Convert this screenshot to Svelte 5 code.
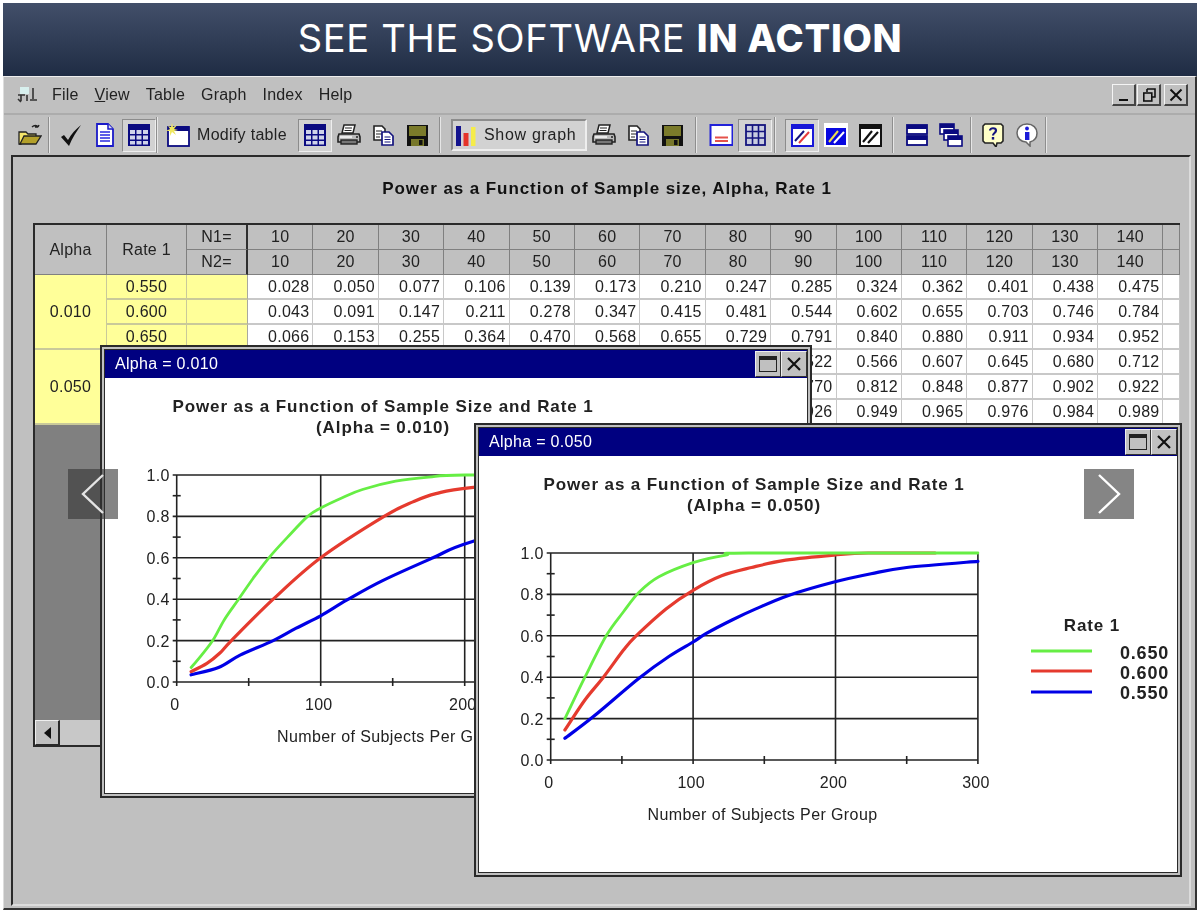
<script>
  const ns = [10,20,30,40,50,60,70,80,90,100,110,120,130,140];
  const groups = [
    { alpha: '0.010', rows: [
      { rate: '0.550', v: '0.028 0.050 0.077 0.106 0.139 0.173 0.210 0.247 0.285 0.324 0.362 0.401 0.438 0.475' },
      { rate: '0.600', v: '0.043 0.091 0.147 0.211 0.278 0.347 0.415 0.481 0.544 0.602 0.655 0.703 0.746 0.784' },
      { rate: '0.650', v: '0.066 0.153 0.255 0.364 0.470 0.568 0.655 0.729 0.791 0.840 0.880 0.911 0.934 0.952' }
    ]},
    { alpha: '0.050', rows: [
      { rate: '', v: '- - - - - - - - 0.522 0.566 0.607 0.645 0.680 0.712' },
      { rate: '', v: '- - - - - - - - 0.770 0.812 0.848 0.877 0.902 0.922' },
      { rate: '', v: '- - - - - - - - 0.926 0.949 0.965 0.976 0.984 0.989' }
    ]}
  ];
  const GREEN = '#66ee44', RED = '#e53a2e', BLUE = '#0000e6';
  const chart1 = {
    x0: 71.7, k: 1.44, line2: '(Alpha = 0.010)', cx: 278, axisX: 287, legend: false,
    curves: [
      { c: BLUE, w: 3.2, d: [[10,.035],[29,.07],[44,.13],[67,.2],[83,.26],[100,.32],[118,.395],[143,.49],[178,.6],[206,.68],[300,.86]] },
      { c: RED, w: 3.2, d: [[10,.05],[21,.09],[30,.14],[38,.2],[67,.4],[100,.6],[144,.8],[164,.87],[180,.91],[206,.94],[300,1]] },
      { c: GREEN, w: 2.8, d: [[10,.07],[15,.11],[25,.2],[33,.3],[43,.4],[53,.5],[64,.6],[77,.7],[91,.8],[100,.84],[115,.89],[129,.93],[152,.97],[175,.99],[200,1],[300,1]] }
    ]
  };
  const chart2 = {
    x0: 71.7, k: 1.424, line2: '(Alpha = 0.050)', cx: 275, axisX: 283.5, legend: true,
    curves: [
      { c: BLUE, w: 3.2, d: [[10,.105],[30,.21],[62,.395],[83,.5],[100,.57],[109,.61],[127,.675],[144,.73],[167,.795],[199,.86],[225,.9],[250,.93],[300,.96]] },
      { c: RED, w: 3.2, d: [[10,.145],[24,.29],[37,.4],[51,.53],[60,.6],[81,.73],[100,.82],[120,.89],[141,.93],[165,.965],[199,.99],[223,1],[270,1]] },
      { c: GREEN, w: 2.8, d: [[10,.2],[24,.4],[39,.6],[51,.715],[62,.81],[76,.885],[100,.953],[123,.99],[139,1],[300,1]] }
    ]
  };
  const Y1 = 97, Y0 = 304;
  const py = (p) => Y0 - (Y0 - Y1) * p;
  // Catmull-Rom through the data points, capped at power = 1.
  const curve = (ch, d) => {
    const P = d.map(([n, p]) => [ch.x0 + n * ch.k, py(p)]);
    let s = `M${P[0][0].toFixed(1)} ${P[0][1].toFixed(1)}`;
    for (let i = 0; i < P.length - 1; i++) {
      const a = P[Math.max(i - 1, 0)], b = P[i], c = P[i + 1], e = P[Math.min(i + 2, P.length - 1)];
      const c1 = [b[0] + (c[0] - a[0]) / 6, Math.max(py(1), b[1] + (c[1] - a[1]) / 6)];
      const c2 = [c[0] - (e[0] - b[0]) / 6, Math.max(py(1), c[1] - (e[1] - b[1]) / 6)];
      s += `C${c1[0].toFixed(1)} ${c1[1].toFixed(1)} ${c2[0].toFixed(1)} ${c2[1].toFixed(1)} ${c[0].toFixed(1)} ${c[1].toFixed(1)}`;
    }
    return s;
  };
</script>

{#snippet icon(name)}
  <svg class="ic" viewBox="0 0 24 24" width="24" height="24" aria-hidden="true">
    {#if name === 'folder'}
      <path d="M14 4c2-2 5-2 6 0M20 4l1-2M20 4l-3 0" fill="none" stroke="#222" stroke-width="1.4"/>
      <path d="M1 9h7l2 2h8v3H7L3 21H1z" fill="#f5e56a" stroke="#222" stroke-width="1.3"/>
      <path d="M6 13h17l-5 8H2z" fill="#b3a02a" stroke="#222" stroke-width="1.3"/>
    {:else if name === 'check'}
      <path d="M2 14l3-2 4 5C12 11 17 6 22 2c-4 6-9 13-12 21z" fill="#111"/>
    {:else if name === 'doc'}
      <path d="M4 1h11l5 5v17H4z" fill="#fff" stroke="#1a1ac8" stroke-width="1.8"/>
      <path d="M15 1v5h5" fill="#dde" stroke="#1a1ac8" stroke-width="1.5"/>
      <path d="M7 9h10M7 12h10M7 15h10M7 18h10" stroke="#2a2ae0" stroke-width="1.5"/>
    {:else if name === 'grid'}
      <rect x="1" y="1" width="22" height="22" fill="#0a0a80"/>
      <g fill="#cfd3ea">
        <rect x="3" y="7" width="5" height="4"/><rect x="9.5" y="7" width="5" height="4"/><rect x="16" y="7" width="5" height="4"/>
        <rect x="3" y="12.5" width="5" height="4"/><rect x="9.5" y="12.5" width="5" height="4"/><rect x="16" y="12.5" width="5" height="4"/>
        <rect x="3" y="18" width="5" height="3.5"/><rect x="9.5" y="18" width="5" height="3.5"/><rect x="16" y="18" width="5" height="3.5"/>
      </g>
    {:else if name === 'gridlight'}
      <rect x="3" y="2" width="19" height="20" fill="#c8cce0" stroke="#14147e" stroke-width="1.8"/>
      <path d="M9.5 2v20M15.5 2v20M3 8.5h19M3 15h19" stroke="#14147e" stroke-width="1.6"/>
    {:else if name === 'newtable'}
      <rect x="2" y="4" width="21" height="19" fill="#fff" stroke="#0a0a80" stroke-width="1.8"/>
      <rect x="2" y="3" width="21" height="5" fill="#0a0a80"/>
      <path d="M6 0l1 4 4-2-3 4 4 1-4 1 2 4-4-3-2 4 0-5-4 0 4-2-2-3 3 1z" fill="#f0e860"/>
    {:else if name === 'printer'}
      <path d="M7 2h11l-2 8H5z" fill="#fff" stroke="#222" stroke-width="1.5"/>
      <path d="M8 5h7M7.5 7.5h7" stroke="#222" stroke-width="1"/>
      <path d="M2 11h20l1 3v5H1v-5z" fill="#bbb" stroke="#222" stroke-width="1.6"/>
      <rect x="4" y="17" width="16" height="4" fill="#777" stroke="#222" stroke-width="1.4"/>
      <path d="M3 14h12" stroke="#fff" stroke-width="1.4"/>
      <circle cx="20" cy="14" r="1" fill="#222"/>
    {:else if name === 'copy'}
      <path d="M3 3h8l3 3v11H3z" fill="#fff" stroke="#222" stroke-width="1.6"/>
      <path d="M5 8h6M5 11h6M5 14h4" stroke="#222" stroke-width="1.2"/>
      <path d="M11 9h7l4 4v9H11z" fill="#fff" stroke="#14147e" stroke-width="1.7"/>
      <path d="M13.5 14h6M13.5 16.5h6M13.5 19h6" stroke="#14147e" stroke-width="1.2"/>
    {:else if name === 'floppy'}
      <rect x="2" y="2" width="21" height="21" fill="#111"/>
      <rect x="4" y="3" width="17" height="10" fill="#7a7a2a"/>
      <rect x="6" y="16" width="13" height="7" fill="#77772a"/>
      <rect x="14" y="17" width="3.5" height="5" fill="#111"/>
    {:else if name === 'bars'}
      <rect x="2" y="3" width="5" height="20" fill="#14148e"/>
      <rect x="9.5" y="10" width="5" height="13" fill="#e5342a"/>
      <rect x="17" y="4" width="4.5" height="19" fill="#f5ec4a"/>
    {:else if name === 'redline'}
      <rect x="1.5" y="2" width="22" height="20" fill="#fff" stroke="#2222d8" stroke-width="2"/>
      <path d="M6 14.5h13M6 18h13" stroke="#e5524a" stroke-width="1.8"/>
    {:else if name === 'slash1'}
      <rect x="2" y="2" width="21" height="21" fill="#fff" stroke="#1818d8" stroke-width="2"/>
      <rect x="2" y="1" width="21" height="5" fill="#1818d8"/>
      <path d="M5 18L14 8" stroke="#14147e" stroke-width="2"/><path d="M9 20L19 9" stroke="#e53a3a" stroke-width="2"/>
    {:else if name === 'slash2'}
      <rect x="0" y="0" width="24" height="24" fill="#fff"/>
      <rect x="2" y="5" width="20" height="17" fill="#0808e0"/>
      <path d="M5 19L14 8" stroke="#eee04a" stroke-width="2"/><path d="M10 20L20 9" stroke="#fff" stroke-width="2"/>
    {:else if name === 'slash3'}
      <rect x="2" y="2" width="21" height="21" fill="#fff" stroke="#111" stroke-width="2"/>
      <rect x="2" y="1" width="21" height="5" fill="#111"/>
      <path d="M5 19L14 8" stroke="#111" stroke-width="2.2"/><path d="M10 20L20 9" stroke="#111" stroke-width="2.2"/>
    {:else if name === 'stack'}
      <rect x="2" y="2" width="20" height="9" fill="#fff" stroke="#0a0a80" stroke-width="1.8"/>
      <rect x="2" y="2" width="20" height="4" fill="#0a0a80"/>
      <rect x="2" y="13" width="20" height="9" fill="#fff" stroke="#0a0a80" stroke-width="1.8"/>
      <rect x="2" y="13" width="20" height="4" fill="#0a0a80"/>
    {:else if name === 'cascade'}
      <rect x="1" y="1" width="14" height="10" fill="#fff" stroke="#0a0a80" stroke-width="1.6"/><rect x="1" y="1" width="14" height="4" fill="#0a0a80"/>
      <rect x="5" y="7" width="14" height="10" fill="#fff" stroke="#0a0a80" stroke-width="1.6"/><rect x="5" y="7" width="14" height="4" fill="#0a0a80"/>
      <rect x="9" y="13" width="14" height="10" fill="#fff" stroke="#0a0a80" stroke-width="1.6"/><rect x="9" y="13" width="14" height="4" fill="#0a0a80"/>
    {:else if name === 'help'}
      <path d="M4 1h16l2 2v15l-2 2h-4l-1 4-3-4H4l-2-2V3z" fill="#ffffc8" stroke="#222" stroke-width="1.6"/>
      <path d="M9 7.5c0-3 6-3 6 0 0 2.5-3 2.5-3 5" fill="none" stroke="#14147e" stroke-width="2.2"/>
      <rect x="10.8" y="14" width="2.4" height="2.6" fill="#14147e"/>
    {:else if name === 'info'}
      <path d="M12 1c6 0 10 4 10 9s-3 8-7 9l0 4-4-4C6 19 2 15 2 10s4-9 10-9z" fill="#fff" stroke="#666" stroke-width="1.5"/>
      <circle cx="12" cy="5.5" r="1.9" fill="#1a1ad8"/>
      <rect x="10" y="9" width="4.4" height="8" fill="#1a1ad8"/>
    {/if}
  </svg>
{/snippet}

{#snippet tb(name, pressed = false)}
  <span class="tb" class:pressed>{@render icon(name)}</span>
{/snippet}

{#snippet chart(ch)}
  <svg class="chart" aria-hidden="false">
    <text class="ttl" x={ch.cx} y="34">Power as a Function of Sample Size and Rate 1</text>
    <text class="ttl" x={ch.cx} y="55">{ch.line2}</text>
    <g class="grid">
      {#each [1, .8, .6, .4, .2, 0] as p}
        <line x1={ch.x0 - 4} x2={ch.x0 + 300 * ch.k} y1={py(p)} y2={py(p)}/>
        <text class="yl" x={ch.x0 - 7} y={py(p) + 6}>{p.toFixed(1)}</text>
      {/each}
      {#each [.1, .3, .5, .7, .9] as p}
        <line x1={ch.x0 - 4} x2={ch.x0 + 4} y1={py(p)} y2={py(p)}/>
      {/each}
      {#each [0, 100, 200, 300] as n}
        <line x1={ch.x0 + n * ch.k} x2={ch.x0 + n * ch.k} y1={Y1} y2={Y0 + 4}/>
        <text class="xl" x={ch.x0 + n * ch.k - 2} y="332">{n}</text>
      {/each}
      {#each [50, 150, 250] as n}
        <line x1={ch.x0 + n * ch.k} x2={ch.x0 + n * ch.k} y1={Y0 - 4} y2={Y0 + 4}/>
      {/each}
    </g>
    {#each ch.curves as c}
      <path d={curve(ch, c.d)} fill="none" stroke={c.c} stroke-width={c.w} stroke-linejoin="round" stroke-linecap="round"/>
    {/each}
    <text class="xl axis" x={ch.axisX} y="364">Number of Subjects Per Group</text>
    {#if ch.legend}
      <text class="ttl" x="613" y="175">Rate 1</text>
      <line x1="552" x2="613" y1="195" y2="195" stroke={GREEN} stroke-width="3"/>
      <line x1="552" x2="613" y1="215" y2="215" stroke={RED} stroke-width="3"/>
      <line x1="552" x2="613" y1="236" y2="236" stroke={BLUE} stroke-width="3"/>
      <text class="lg" x="690" y="203">0.650</text>
      <text class="lg" x="690" y="223">0.600</text>
      <text class="lg" x="690" y="243">0.550</text>
    {/if}
  </svg>
{/snippet}

{#snippet mdi(title, ch, cls)}
  <section class="mdi {cls}">
    <div class="inner">
      <header class="tbar">
        <span class="tt">{title}</span>
        <span class="wbtn"><i class="max"></i></span>
        <span class="wbtn">
          <svg viewBox="0 0 14 14" width="14" height="14" aria-hidden="true"><path d="M1 1l12 12M13 1L1 13" stroke="#111" stroke-width="2.2"/></svg>
        </span>
      </header>
      <div class="pane">{@render chart(ch)}</div>
    </div>
  </section>
{/snippet}

<div class="page">
  <h1 class="banner">SEE THE SOFTWARE <b>IN ACTION</b></h1>

  <div class="win">
    <nav class="menubar">
      <svg class="appicon" viewBox="0 0 22 16" width="22" height="16" aria-hidden="true">
        <rect x="3" y="0" width="9" height="7" fill="#d8f0ee"/>
        <path d="M1 8h7M4 8v6M1 12l3 3M10 8v6M16 1v11M13 13h7" stroke="#333" stroke-width="1.6" fill="none"/>
      </svg>
      <span>File</span><span><u>V</u>iew</span><span>Table</span><span>Graph</span><span>Index</span><span>Help</span>
      <div class="ctl">
        <span class="cb"><i class="mn"></i></span>
        <span class="cb">
          <svg viewBox="0 0 14 14" width="14" height="14" aria-hidden="true"><path d="M5 1h8v8h-3M5 1v3" fill="none" stroke="#111" stroke-width="1.6"/><rect x="1.8" y="5" width="8" height="8" fill="none" stroke="#111" stroke-width="1.6"/></svg>
        </span>
        <span class="cb gap">
          <svg viewBox="0 0 14 14" width="14" height="14" aria-hidden="true"><path d="M1.5 1.5l11 11M12.5 1.5l-11 11" stroke="#111" stroke-width="2"/></svg>
        </span>
      </div>
    </nav>

    <div class="toolbar">
      {@render tb('folder')}
      <i class="sep s-a"></i>
      {@render tb('check')}{@render tb('doc')}{@render tb('grid', true)}
      <i class="sep s-b"></i>
      {@render tb('newtable')}
      <span class="lbl">Modify table</span>
      {@render tb('grid', true)}{@render tb('printer')}{@render tb('copy')}{@render tb('floppy')}
      <i class="sep s-c"></i>
      <span class="showgraph">{@render icon('bars')}<span>Show graph</span></span>
      {@render tb('printer')}{@render tb('copy')}{@render tb('floppy')}
      <i class="sep s-d"></i>
      {@render tb('redline')}{@render tb('gridlight', true)}
      <i class="sep s-e"></i>
      {@render tb('slash1', true)}{@render tb('slash2')}{@render tb('slash3')}
      <i class="sep s-f"></i>
      {@render tb('stack')}{@render tb('cascade')}
      <i class="sep s-g"></i>
      {@render tb('help')}{@render tb('info')}
      <i class="sep s-h"></i>
    </div>

    <main class="client">
      <h2 class="maintitle">Power as a Function of Sample size, Alpha, Rate 1</h2>
      <div class="tablewrap">
        <table>
          <colgroup>
            <col class="c-alpha"/><col class="c-rate"/><col class="c-n"/>
            {#each ns as _}<col class="c-d"/>{/each}
            <col class="c-last"/>
          </colgroup>
          <thead>
            <tr>
              <th rowspan="2">Alpha</th><th rowspan="2">Rate 1</th><th class="nh">N1=</th>
              {#each ns as n}<th>{n}</th>{/each}<th></th>
            </tr>
            <tr>
              <th class="nh">N2=</th>
              {#each ns as n}<th>{n}</th>{/each}<th></th>
            </tr>
          </thead>
          <tbody>
            {#each groups as g}
              {#each g.rows as r, i}
                <tr>
                  {#if i === 0}<td class="y" rowspan="3">{g.alpha}</td>{/if}
                  <td class="y">{r.rate}</td>
                  <td class="y yn"></td>
                  {#each r.v.split(' ') as v}<td class="num">{v === '-' ? '' : v}</td>{/each}
                  <td class="end"></td>
                </tr>
              {/each}
            {/each}
          </tbody>
        </table>
        <div class="empty"></div>
        <div class="hscroll">
          <span class="sb"><i class="la"></i></span>
          <span class="track"></span>
        </div>
      </div>

      {@render mdi('Alpha = 0.010', chart1, 'w1')}
      {@render mdi('Alpha = 0.050', chart2, 'w2')}
    </main>
  </div>

  <button class="arrow prev" aria-label="Previous">
    <svg viewBox="0 0 50 50" width="50" height="50" aria-hidden="true"><path d="M35 6L15 25l20 19" fill="none" stroke="#e4e4e4" stroke-width="2.4"/></svg>
  </button>
  <button class="arrow next" aria-label="Next">
    <svg viewBox="0 0 50 50" width="50" height="50" aria-hidden="true"><path d="M15 6l20 19-20 19" fill="none" stroke="#fff" stroke-width="2.4"/></svg>
  </button>
</div>

<style>
  :global(body) { margin: 0; background: #fff; }
  .page {
    position: relative; width: 1200px; height: 914px; box-sizing: border-box;
    padding: 3px 3px 4px; display: flex; flex-direction: column; overflow: hidden;
    font-family: "Liberation Sans", Arial, sans-serif; color: #222;
  }
  .banner {
    margin: 0; height: 73px; line-height: 70px; text-align: center; flex: none;
    background: linear-gradient(#424f69, #1f2c44); color: #fff;
    font-family: Inter, "Open Sans", sans-serif; font-weight: 400; font-size: 38px; letter-spacing: .72px;
  }
  .banner b { font-weight: 800; }
  .win {
    flex: 1; min-height: 0; display: flex; flex-direction: column; background: #c0c0c0;
    border-top: 1px solid #eee; border-left: 1px solid #ddd; border-right: 2px solid #333; border-bottom: 2px solid #333;
    filter: blur(.55px);
  }
  .menubar {
    height: 38px; flex: none; box-sizing: border-box; display: flex; align-items: center; gap: 16px;
    padding: 0 7px 0 13px; font-size: 16px; letter-spacing: .2px; border-bottom: 2px solid #acacac;
  }
  .appicon { margin-right: -3px; }
  .ctl { margin-left: auto; display: flex; align-items: center; }
  .cb {
    width: 24px; height: 22px; box-sizing: border-box; background: #c0c0c0; display: flex; align-items: center; justify-content: center;
    border-top: 1px solid #f4f4f4; border-left: 1px solid #f4f4f4; border-right: 2px solid #444; border-bottom: 2px solid #444;
    margin-left: 1px;
  }
  .cb.gap { margin-left: 3px; }
  .mn { width: 9px; height: 2.5px; background: #111; margin-top: 11px; display: block; }
  .toolbar {
    height: 40px; flex: none; box-sizing: border-box; display: flex; align-items: center; padding-left: 9px;
  }
  .tb { width: 34px; height: 33px; display: flex; align-items: center; justify-content: center; flex: none; box-sizing: border-box; }
  .tb.pressed { background: #d2d2d2; border: 1px solid; border-color: #8c8c8c #eee #eee #8c8c8c; }
  .ic { display: block; flex: none; }
  .sep { display: block; width: 2px; height: 36px; flex: none; background: linear-gradient(90deg, #8e8e8e 50%, #e6e6e6 50%); }
  .s-a { margin: 0 4px 0 1px; }
  .s-b { margin: 0 3px 0 0; }
  .s-c { margin: 0 10px 0 5px; }
  .s-d { margin: 0 7px 0 6px; }
  .s-e { margin: 0 9px 0 2px; }
  .s-f { margin: 0 6px 0 5px; }
  .s-g { margin: 0 4px 0 2px; }
  .s-h { margin: 0 0 0 1px; }
  .lbl { width: 103px; font-size: 16px; letter-spacing: .3px; white-space: nowrap; padding-left: 2px; box-sizing: border-box; }
  .showgraph {
    width: 136px; height: 32px; flex: none; box-sizing: border-box; display: flex; align-items: center; gap: 6px; padding-left: 1px;
    background: #d2d2d2; border: 2px solid; border-color: #8c8c8c #eee #eee #8c8c8c; font-size: 16px; letter-spacing: .7px; white-space: nowrap;
  }
  .client {
    position: relative; flex: 1; min-height: 0; margin: 0 4px 2px 7px; box-sizing: border-box;
    border-top: 2px solid #2a2a2a; border-left: 2px solid #2a2a2a; border-right: 2px solid #dcdcdc; border-bottom: 2px solid #dcdcdc;
    padding: 0 0 0 20px;
  }
  .maintitle {
    margin: 0; height: 66px; line-height: 64px; text-align: center; font-size: 17px; font-weight: 700; color: #111; letter-spacing: .92px;
    padding-right: 8px;
  }
  .tablewrap {
    width: 1147px; height: 524px; box-sizing: border-box; display: flex; flex-direction: column;
    border-top: 2px solid #2a2a2a; border-left: 2px solid #2a2a2a; border-bottom: 2px solid #2a2a2a; background: #808080;
  }
  table { table-layout: fixed; width: 1145px; border-collapse: separate; border-spacing: 0; background: #fff; flex: none; }
  .c-alpha { width: 72px; } .c-rate { width: 80px; } .c-n { width: 61px; } .c-d { width: 65.4px; } .c-last { width: 16.4px; }
  th, td { height: 25px; box-sizing: border-box; padding: 0; font-size: 16px; font-weight: 400; text-align: center; letter-spacing: .25px; color: #222; overflow: hidden; white-space: nowrap; }
  th { background: #c0c0c0; border-right: 1px solid #808080; border-bottom: 1px solid #808080; }
  th.nh { border-right: 2px solid #2f2f2f; }
  td { border-right: 1px solid #c8c8c8; border-bottom: 2px solid #c8c8c8; }
  td.y { background: #ffff99; border-color: #c9c99a; }
  td.yn { border-right-color: #a8a8a0; }
  td.num { text-align: right; padding-right: 3px; background: #fff; }
  .empty { flex: 1; }
  .hscroll { height: 25px; flex: none; display: flex; background: #c8c8c8; }
  .sb { width: 25px; box-sizing: border-box; display: flex; align-items: center; justify-content: center; background: #c0c0c0; border: 1px solid; border-color: #eee #2a2a2a #2a2a2a #eee; border-right-width: 2px; }
  .la { width: 0; height: 0; border: 6px solid transparent; border-right: 7px solid #111; border-left: 0; }
  .track { flex: 1; }
  .mdi { position: absolute; box-sizing: border-box; border: 2px solid #2a2a2a; padding: 2px; background: #c0c0c0; }
  .w1 { left: 87px; top: 188px; width: 712px; height: 453px; }
  .w2 { left: 461px; top: 266px; width: 708px; height: 454px; }
  .inner { height: 100%; box-sizing: border-box; border: 1px solid #2a2a2a; display: flex; flex-direction: column; background: #fff; }
  .tbar { height: 28px; flex: none; background: #000080; color: #fff; display: flex; align-items: center; padding-left: 10px; font-size: 16px; letter-spacing: .3px; }
  .tt { flex: 1; }
  .wbtn { width: 26px; height: 26px; box-sizing: border-box; background: #c0c0c0; display: flex; align-items: center; justify-content: center; border-top: 1px solid #eee; border-left: 1px solid #eee; border-right: 1px solid #333; border-bottom: 1px solid #333; }
  .max { width: 18px; height: 16px; box-sizing: border-box; border: 1.5px solid #222; border-top-width: 4px; display: block; }
  .pane { flex: 1; min-height: 0; background: #fff; }
  .chart { display: block; width: 100%; height: 100%; }
  .chart text { font-family: "Liberation Sans", Arial, sans-serif; fill: #222; }
  .ttl { font-size: 17px; font-weight: 700; text-anchor: middle; fill: #111; letter-spacing: .9px; }
  .grid line { stroke: #222; stroke-width: 1.6; }
  .yl { font-size: 16px; text-anchor: end; letter-spacing: .3px; }
  .xl { font-size: 16px; text-anchor: middle; letter-spacing: .2px; }
  .axis { letter-spacing: .4px; }
  .lg { font-size: 18px; font-weight: 700; text-anchor: end; letter-spacing: .8px; fill: #111; }
  .arrow { position: absolute; top: 469px; width: 50px; height: 50px; padding: 0; border: 0; background: rgba(51,51,51,.6); display: block; }
  .arrow svg { display: block; }
  .prev { left: 68px; }
  .next { left: 1084px; }
</style>
